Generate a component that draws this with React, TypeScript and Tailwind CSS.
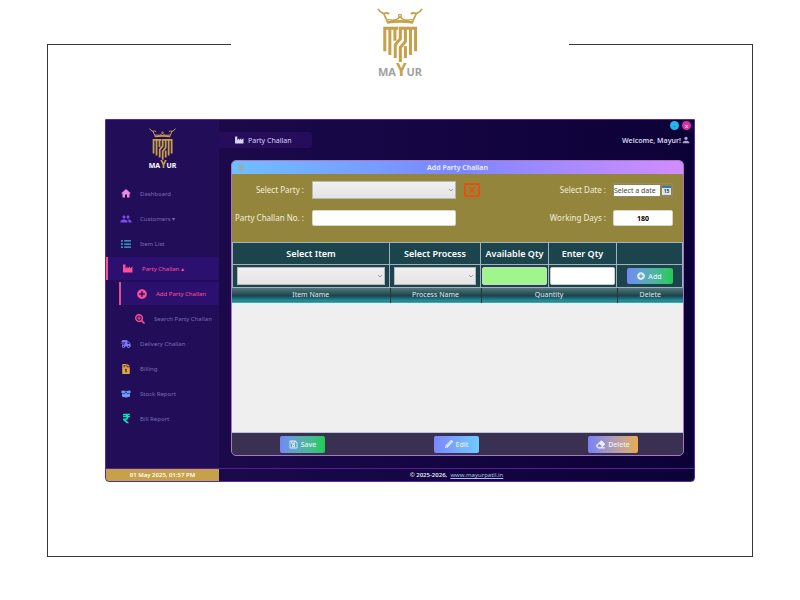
import type { ReactNode } from "react";
import {
  FaListUl,
  FaPlusCircle,
  FaSearchPlus,
  FaShippingFast,
  FaFileInvoiceDollar,
  FaBoxOpen,
  FaRupeeSign,
  FaRegSave,
  FaPencilAlt,
  FaEraser,
} from "react-icons/fa";
import { MdHome, MdPeople, MdPerson } from "react-icons/md";

function Emblem({ className }: { className: string }) {
  return (
    <svg viewBox="111 26 136 164" className={className} aria-hidden="true">
      <g fill="none" stroke="#c7a14a">
        <path d="M140 68 Q179 61 218 68" strokeWidth="8" />
        <path d="M114 28 Q119 38 131 42 Q136 54 143 68" strokeWidth="5" />
        <path d="M244 28 Q239 38 227 42 Q222 54 215 68" strokeWidth="5" />
        <path d="M131 42 Q140 37 147 43" strokeWidth="5" />
        <path d="M227 42 Q218 37 211 43" strokeWidth="5" />
        <path d="M142 59 Q166 66 179 52 Q192 66 216 59" strokeWidth="4" />
        <circle cx="179" cy="48" r="4" strokeWidth="4" />
      </g>
      <g fill="none" stroke="#c7a14a" strokeWidth="9">
        <path d="M134 153 V85 H174" />
        <path d="M149 85 V164" />
        <path d="M164 85 V122" />
        <path d="M180 81 V116 L165 134 V173" />
        <path d="M180 85 H225 V153" />
        <path d="M195 85 V124 L180 142 V185" />
        <path d="M195 138 V173" />
        <path d="M210 85 V164" />
      </g>
    </svg>
  );
}

function Factory({ className }: { className: string }) {
  return (
    <svg viewBox="0 0 20 18" className={className} fill="currentColor" aria-hidden="true">
      <path d="M0 1 H5 V9 L9 5 V9 L14 5 V9 L19 5 V17 H0Z" />
    </svg>
  );
}

type NavProps = {
  icon: ReactNode;
  label: string;
  tone?: "plain" | "open" | "current" | "child";
};

const rowTones = {
  plain: "pl-[14px] gap-[8px] text-[#7a6db5]",
  open: "pl-[14px] gap-[8px] border-l-2 border-[#ff4f93] bg-[#2c1070] text-[#ff4f93]",
  current: "ml-[13px] pl-[15px] gap-[8px] border-l-2 border-[#e0508f] bg-[#2c1070] text-[#ff4f93]",
  child: "pl-[28px] gap-[8px] text-[#7a6db5]",
};

function NavItem({ icon, label, tone = "plain" }: NavProps) {
  return (
    <li className="h-[25px] py-px">
      <a
        href="#"
        aria-current={tone === "current" ? "page" : undefined}
        className={"flex h-[23px] items-center whitespace-nowrap " + rowTones[tone]}
      >
        <span className="flex w-[12px] justify-center text-[10px]">{icon}</span>
        {label}
      </a>
    </li>
  );
}

function Combo({ id, label, className }: { id: string; label?: string; className: string }) {
  return (
    <div className={"relative " + className}>
      <select
        id={id}
        aria-label={label}
        className="block h-[18px] w-full appearance-none border border-[#b4b8b8] bg-linear-to-b from-[#f0f0f0] to-[#e4e4e4] text-[7px]"
      >
        <option value=""></option>
      </select>
      <svg viewBox="0 0 4 3" className="pointer-events-none absolute top-[8px] right-[3px] h-[3px] w-[4px]" aria-hidden="true">
        <path d="M0 0 L2 2 L4 0" fill="none" stroke="#8a8a8a" strokeWidth="0.8" />
      </svg>
    </div>
  );
}

const actionBase =
  "flex items-center justify-center gap-[3px] rounded-[2px] bg-linear-to-r text-[7px] font-medium text-[#e9f1fb]";

export default function App() {
  return (
    <div className="min-h-screen bg-white px-[47px] pb-[44px] font-['Noto_Sans','Open_Sans',sans-serif] text-[6px] leading-none">
      <header className="flex h-[78px] items-end">
        <div className="h-[34px] w-[184px] border-t border-l border-[#3a363a]" />
        <div className="flex flex-1 flex-col items-center">
          <Emblem className="h-[56px] w-[46px]" />
          <span className="flex h-[14px] items-baseline text-[11px] leading-[12px] font-bold text-[#a0a0a0]">
            MA<span className="text-[17px] text-[#c7a14a]">Y</span>UR
          </span>
        </div>
        <div className="h-[34px] w-[184px] border-t border-r border-[#3a363a]" />
      </header>

      <main className="border-x border-b border-[#3a363a] px-[57px] pt-[41px] pb-[74px]">
        <div className="overflow-hidden rounded-b-[4px] border border-[#5b2a9a] bg-linear-to-r from-[#1f0b4e] via-[#160644] to-[#0c0137]">
          <div className="flex">
            <aside className="w-[113px] shrink-0 bg-[#220e58]">
              <div className="flex h-[61px] flex-col items-center pt-[8px]">
                <Emblem className="h-[33px] w-[27px]" />
                <span className="flex h-[9px] items-baseline text-[7px] leading-[7px] font-bold text-white">
                  MA<span className="text-[10px] text-[#c7a14a]">Y</span>UR
                </span>
              </div>
              <nav aria-label="Main">
                <ul>
                  <NavItem icon={<MdHome className="text-[13px] text-[#e98be0]" />} label="Dashboard" />
                  <NavItem icon={<MdPeople className="text-[12px] text-[#7a4df0]" />} label="Customers ▾" />
                  <NavItem icon={<FaListUl className="text-[#3db4d8]" />} label="Item List" />
                  <NavItem icon={<Factory className="h-[9px] w-[10px]" />} label="Party Challan ▴" tone="open" />
                  <NavItem icon={<FaPlusCircle />} label="Add Party Challan" tone="current" />
                  <NavItem icon={<FaSearchPlus className="text-[#ff4f93]" />} label="Search Party Challan" tone="child" />
                  <NavItem icon={<FaShippingFast className="text-[#7c78f5]" />} label="Delivery Challan" />
                  <NavItem icon={<FaFileInvoiceDollar className="text-[#e5a83f]" />} label="Billing" />
                  <NavItem icon={<FaBoxOpen className="text-[#6a9cf5]" />} label="Stock Report" />
                  <NavItem icon={<FaRupeeSign className="text-[11px] text-[#10e0b0]" />} label="Bill Report" />
                </ul>
              </nav>
            </aside>

            <section className="min-w-0 flex-1">
              <div className="flex h-[40px] justify-between pr-[3px]">
                <h1 className="mt-[12px] flex h-[16px] w-[93px] items-center gap-[4px] rounded-r-[4px] bg-[#250d5c] pl-[16px] text-[7px] text-[#dcd3f3]">
                  <Factory className="h-[8px] w-[9px]" />
                  Party Challan
                </h1>
                <div className="flex flex-col items-end gap-[5px] pt-px">
                  <div className="flex gap-[3px]">
                    <button aria-label="Minimise" className="flex size-[9px] items-center justify-center rounded-full bg-[#25b4ee] text-[6px] text-[#0c3c70]">
                      -
                    </button>
                    <button aria-label="Close" className="flex size-[9px] items-center justify-center rounded-full bg-[#dd2fa6] text-[6px] text-white">
                      x
                    </button>
                  </div>
                  <p className="flex items-center text-[7px] font-semibold text-[#d6d3ee]">
                    Welcome, Mayur! <MdPerson className="text-[10px] text-[#a9a5cf]" />
                  </p>
                </div>
              </div>

              <div className="mr-[10px] mb-[12px] ml-[12px] overflow-hidden rounded-[5px] border border-[#a678c4] bg-[#3a3052]">
                <div className="relative flex h-[13px] items-center justify-center bg-linear-to-r from-[#6ebfff] via-[#7b86ff] to-[#d28cff]">
                  <Emblem className="absolute top-[2px] left-[5px] h-[9px] w-[8px] opacity-70" />
                  <h2 className="text-[7px] font-semibold text-[#f3f1ff]">Add Party Challan</h2>
                </div>

                <form className="flex h-[68px] justify-between bg-[#94853c] pr-[10px] text-[8px] text-[#f1eedd]">
                  <div className="flex flex-col gap-[10px] pt-[7px]">
                    <div className="flex h-[18px] items-center gap-[8px]">
                      <label htmlFor="party" className="w-[72px] text-right">Select Party :</label>
                      <Combo id="party" className="w-[144px]" />
                      <button type="button" aria-label="Clear party" className="flex h-[14px] w-[16px] items-center justify-center rounded-[2px] border-2 border-[#e8500f] text-[#e8500f]">
                        <svg viewBox="0 0 6 6" className="size-[6px]" aria-hidden="true">
                          <path d="M0 0 L6 6 M6 0 L0 6" stroke="currentColor" strokeWidth="1.5" />
                        </svg>
                      </button>
                    </div>
                    <div className="flex h-[18px] items-center gap-[8px]">
                      <label htmlFor="challan" className="w-[72px] text-right whitespace-nowrap">Party Challan No. :</label>
                      <input id="challan" className="h-[16px] w-[144px] rounded-[2px] border border-[#d8d5c0] bg-white px-1 text-[7px] text-black" />
                    </div>
                  </div>
                  <div className="flex flex-col gap-[10px] pt-[7px]">
                    <div className="flex h-[18px] items-center justify-end gap-[7px]">
                      <label htmlFor="date">Select Date :</label>
                      <div className="flex h-[14px] w-[60px] items-center gap-[2px] border border-[#8d8a70]">
                        <input id="date" placeholder="Select a date" className="h-[11px] w-[46px] bg-white text-[7px] text-[#333] placeholder:text-[#444]" />
                        <button type="button" aria-label="Open calendar" className="flex h-[9px] w-[9px] items-center justify-center border-t-2 border-[#2f78c0] bg-[#dce6f0] text-[5px] font-bold text-[#33475b]">
                          15
                        </button>
                      </div>
                    </div>
                    <div className="flex h-[18px] items-center justify-end gap-[7px]">
                      <label htmlFor="days">Working Days :</label>
                      <input id="days" defaultValue="180" className="h-[16px] w-[60px] rounded-[2px] border border-[#d8d5c0] bg-white text-center text-[7px] font-bold text-black" />
                    </div>
                  </div>
                </form>

                <table className="w-full table-fixed border-collapse bg-[#1c444c] text-[9px] text-white">
                  <colgroup>
                    <col />
                    <col className="w-[91px]" />
                    <col className="w-[68px]" />
                    <col className="w-[68px]" />
                    <col className="w-[66px]" />
                  </colgroup>
                  <thead>
                    <tr className="h-[22px] whitespace-nowrap">
                      <th className="border border-[#a3b2b8] p-0 font-semibold">Select Item</th>
                      <th className="border border-[#a3b2b8] p-0 font-semibold">Select Process</th>
                      <th className="border border-[#a3b2b8] p-0 font-semibold">Available Qty</th>
                      <th className="border border-[#a3b2b8] p-0 font-semibold">Enter Qty</th>
                      <td className="border border-[#a3b2b8] p-0" />
                    </tr>
                  </thead>
                  <tbody>
                    <tr className="h-[23px]">
                      <td className="border border-[#a3b2b8] p-0 px-[4px]"><Combo id="item" label="Select Item" className="w-full" /></td>
                      <td className="border border-[#a3b2b8] p-0 px-[4px]"><Combo id="process" label="Select Process" className="w-full" /></td>
                      <td className="border border-[#a3b2b8] p-0 px-px">
                        <input aria-label="Available Qty" readOnly className="block h-[18px] w-full rounded-[2px] border border-[#c9d8c4] bg-[#a0f58c] text-center text-[7px]" />
                      </td>
                      <td className="border border-[#a3b2b8] p-0 px-px">
                        <input aria-label="Enter Qty" className="block h-[18px] w-full rounded-[2px] border border-[#c4cccf] bg-white text-center text-[7px] text-black" />
                      </td>
                      <td className="border border-[#a3b2b8] p-0">
                        <button type="button" className={actionBase + " mx-auto h-[16px] w-[46px] from-[#7388f5] to-[#20cc4c]"}>
                          <FaPlusCircle className="text-[8px]" />
                          Add
                        </button>
                      </td>
                    </tr>
                  </tbody>
                </table>

                <div className="h-[145px] border-b border-[#b9c4d4] bg-[#efefef]">
                  <table className="w-full table-fixed border-collapse text-[7px] text-[#dfeaec]">
                    <colgroup>
                      <col />
                      <col className="w-[91px]" />
                      <col className="w-[136px]" />
                      <col className="w-[66px]" />
                    </colgroup>
                    <thead>
                      <tr className="h-[14px] border-b border-[#1fb6c8] bg-linear-to-b from-[#53777e] via-[#1b434b] via-60% to-[#149aab]">
                        <th className="border-r border-[#23343a] p-0 font-normal">Item Name</th>
                        <th className="border-r border-[#23343a] p-0 font-normal">Process Name</th>
                        <th className="border-r border-[#23343a] p-0 font-normal">Quantity</th>
                        <th className="p-0 font-normal">Delete</th>
                      </tr>
                    </thead>
                    <tbody />
                  </table>
                </div>

                <div className="flex h-[22px] items-center justify-between pr-[45px] pl-[48px]">
                  <button type="button" className={actionBase + " h-[17px] w-[45px] from-[#7388f5] to-[#20cc4c]"}>
                    <FaRegSave className="text-[9px]" />
                    Save
                  </button>
                  <button type="button" className={actionBase + " h-[17px] w-[45px] from-[#7b86ff] to-[#6ccbff]"}>
                    <FaPencilAlt className="text-[8px]" />
                    Edit
                  </button>
                  <button type="button" className={actionBase + " h-[17px] w-[50px] from-[#7b80f5] to-[#e8ac4c]"}>
                    <FaEraser className="text-[9px]" />
                    Delete
                  </button>
                </div>
              </div>
            </section>
          </div>

          <footer className="flex h-[13px] items-center border-t border-[#54209a] text-[#e8e5f5]">
            <time className="flex h-[12px] w-[113px] items-center justify-center bg-[#c7a14a] font-semibold text-white">
              01 May 2025, 01:57 PM
            </time>
            <p className="flex-1 text-center font-semibold">
              © 2025-2026,&nbsp;{" "}
              <a href="#" className="font-normal text-[#a9c4e6] underline">
                www.mayurpatil.in
              </a>
            </p>
          </footer>
        </div>
      </main>
    </div>
  );
}
